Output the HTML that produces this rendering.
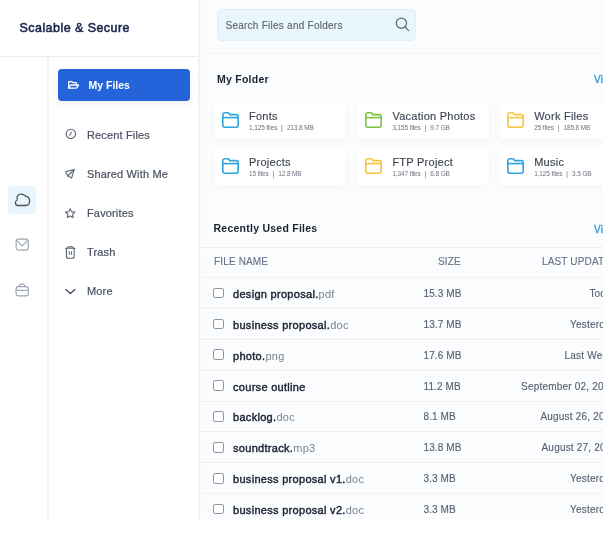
<!DOCTYPE html><html><head><meta charset="utf-8"><style>
*{margin:0;padding:0;box-sizing:border-box}
html,body{width:603px;height:547px;overflow:hidden;background:#fff;will-change:transform;font-family:"Liberation Sans",sans-serif;color:#1f2937}
.a{position:absolute}
#brand{left:19.5px;top:20.5px;font-size:12.5px;color:#1a244d;white-space:nowrap;-webkit-text-stroke:.55px #1a244d;letter-spacing:.45px}
#hdrline{left:0;top:56px;width:198px;height:1px;background:#ececee}
#iconcol{left:47px;top:57px;width:2px;height:462px;background:#f4f4f5}
#sideborder{left:198px;top:0;width:2px;height:519px;background:#f1f2f2}
#main{left:200px;top:0;width:403px;height:519px;background:linear-gradient(to right,#f8f9f9 0,#fafbfb 2px,#fafcfe 3px,#fafcfe 100%)}
#btn{left:58px;top:69px;width:132px;height:31.5px;background:#2563db;border-radius:4px;box-shadow:0 3px 7px rgba(40,60,100,.07)}
#btn span{position:absolute;left:30.5px;top:10px;color:#fff;font-size:10.5px;font-weight:bold;white-space:nowrap}
#btn svg{position:absolute}
.nav{position:absolute;left:87px;font-size:11px;color:#485061;white-space:nowrap;letter-spacing:.15px;-webkit-text-stroke:.2px #485061}
.nav svg,.ic svg{position:absolute}
.cbox{position:absolute;left:8px;top:186px;width:28px;height:28px;background:#e9f6fd;border-radius:4px}
#search{left:216.5px;top:9px;width:199.5px;height:32px;background:#eaf6fd;border:1px solid #e0f0f8;border-radius:5px}
#search span{position:absolute;left:8px;top:9.5px;font-size:10px;color:#5a626e;white-space:nowrap;letter-spacing:.25px;-webkit-text-stroke:.12px #5a626e}
#search svg{position:absolute;left:176px;top:7px}
#mainline{left:204px;top:53px;width:399px;height:1px;background:#f3f5f7}
.h2{position:absolute;font-size:10.5px;font-weight:bold;color:#1b2130;white-space:nowrap;letter-spacing:.25px}
.view{position:absolute;font-size:10px;color:#2f9bd3;white-space:nowrap;-webkit-text-stroke:.3px #2f9bd3;letter-spacing:.3px}
.card{position:absolute;width:132px;height:37px;background:#fff;border-radius:5px;box-shadow:0 2px 6px rgba(30,50,80,.04)}
.card .t{position:absolute;left:35px;top:8.2px;font-size:11px;color:#3d4452;white-space:nowrap;letter-spacing:.25px;-webkit-text-stroke:.15px #3d4452}
.card .s{position:absolute;left:35px;top:22px;font-size:6.5px;color:#6b7280;white-space:nowrap;letter-spacing:-.12px}
.card .s b{font-weight:normal;margin:0 4.2px 0 3.8px}
.card svg{position:absolute;left:7px;top:9.2px}
.row{position:absolute;left:199px;width:404px;height:2px;border-top:1px solid #eeeff2;background:#fdfefe}
.fn{position:absolute;left:233px;font-size:11px;color:#1e2534;white-space:nowrap;-webkit-text-stroke:.4px #1a2030;letter-spacing:.3px;color:#1a2030}
.fn i{font-style:normal;color:#7a8391;-webkit-text-stroke:0}
.sz{position:absolute;font-size:10px;color:#566070;white-space:nowrap;left:423.5px;letter-spacing:.1px;-webkit-text-stroke:.12px #566070}
.dt{position:absolute;font-size:10px;color:#566070;white-space:nowrap;letter-spacing:.2px;-webkit-text-stroke:.12px #566070}
.ck{position:absolute;left:213px;width:11px;height:10.8px;border:1.1px solid #8a93a2;border-radius:2.2px;background:#fff}
.th{position:absolute;font-size:10px;color:#66738a;white-space:nowrap;letter-spacing:.15px;-webkit-text-stroke:.12px #66738a}
</style></head><body>
<div id="brand" class="a">Scalable &amp; Secure</div>
<div id="hdrline" class="a"></div><div id="iconcol" class="a"></div><div id="sideborder" class="a"></div><div id="main" class="a"></div>
<div id="btn" class="a"><svg style="left:0;top:0" width="132" height="32" viewBox="58 69 132 32" fill="none" stroke="#fff" stroke-width="1.3" stroke-linejoin="round" stroke-linecap="round"><g transform="translate(66,79)"><path d="M2.65 9.2V3.3Q2.65 2.7 3.25 2.7H6L7 3.7H9.8Q10.4 3.7 10.4 4.3V6"/><path d="M2.65 9.2L4.3 6.4Q4.5 6 5 6H12Q12.6 6 12.3 6.5L10.6 8.8Q10.3 9.2 9.8 9.2Z"/></g></svg><span>My Files</span></div>
<div class="cbox"></div>
<svg class="a" style="left:13px;top:191px" width="18" height="17" viewBox="0 0 18 17" fill="none" stroke="#4b5262" stroke-width="1.3" stroke-linejoin="round"><path d="M4.2 9C3.2 5.5 5.2 3.1 8 3.1C10.2 3.1 11.6 4.2 12.4 5.2C15 5.6 16.6 7.5 16.6 10C16.6 12.6 15 14.5 12.8 14.5H5C3.4 14.5 2.4 13.3 2.4 11.8C2.4 10.4 3.2 9.3 4.2 9Z"/></svg>
<svg class="a" style="left:15.3px;top:238.2px" width="14" height="13" viewBox="0 0 14 13" fill="none" stroke="#9ea5b2" stroke-width="1.15" stroke-linejoin="round"><rect x="1.15" y="1.05" width="12.1" height="11" rx="2.2"/><path d="M1.4 2.2L7.2 7.9L12.9 2.2"/></svg>
<svg class="a" style="left:15px;top:283px" width="15" height="14" viewBox="0 0 15 14" fill="none" stroke="#9ea5b2" stroke-width="1.15" stroke-linejoin="round"><rect x="1.05" y="3.65" width="12.3" height="9.2" rx="2.5"/><path d="M3.9 3.65C4.6 1.6 5.6 0.85 7.05 0.85C8.5 0.85 9.5 1.6 10.2 3.65"/><path d="M1.05 7.3H13.35"/><path d="M6.3 7.3L6.8 8L7.3 7.3"/></svg>
<div class="nav" style="top:129.2px">Recent Files</div>
<div class="nav" style="top:168.4px">Shared With Me</div>
<div class="nav" style="top:207.4px">Favorites</div>
<div class="nav" style="top:246.3px">Trash</div>
<div class="nav" style="top:285.3px">More</div>
<svg class="a" style="left:64px;top:127.2px" width="14" height="14" viewBox="0 0 14 14" fill="none" stroke="#5d6677" stroke-width="1.1" stroke-linecap="round"><circle cx="6.85" cy="6.9" r="4.7"/><path d="M7.1 4.8Q7.2 7 5.6 8.2"/></svg>
<svg class="a" style="left:62px;top:166px" width="16" height="16" viewBox="0 0 16 16" fill="none" stroke="#5d6677" stroke-width="1.1" stroke-linejoin="round" stroke-linecap="round"><path d="M3.6 5.8L12.2 3.6L9.6 12L5.8 10.1Z"/><path d="M12.2 3.6L5.7 10"/></svg>
<svg class="a" style="left:62px;top:205px" width="17" height="16" viewBox="0 0 17 16" fill="none" stroke="#5d6677" stroke-width="1.1" stroke-linejoin="round"><path d="M8.2 3.7L9.65 6.63L12.88 7.1L10.54 9.38L11.09 12.6L8.2 11.08L5.31 12.6L5.86 9.38L3.52 7.1L6.75 6.63Z"/></svg>
<svg class="a" style="left:62px;top:243px" width="16" height="18" viewBox="0 0 16 18" fill="none" stroke="#5d6677" stroke-width="1.1" stroke-linejoin="round" stroke-linecap="round"><path d="M4.4 5.3V13.2Q4.4 15.2 6.4 15.2H10.2Q12.2 15.2 12.2 13.2V5.3"/><path d="M3.6 5.3H13"/><path d="M5.5 5.3Q5.5 3.6 8.3 3.6Q11.1 3.6 11.1 5.3"/><path d="M7.3 8.8V11.3M9.5 8.8V11.3"/></svg>
<svg class="a" style="left:62px;top:286px" width="16" height="10" viewBox="0 0 16 10" fill="none" stroke="#3f4858" stroke-width="1.3" stroke-linecap="round" stroke-linejoin="round"><path d="M3.8 3.6L8.4 7.4L12.8 3.4"/></svg>
<div id="search" class="a"><span>Search Files and Folders</span><svg width="17" height="17" viewBox="0 0 17 17" fill="none" stroke="#5f6878" stroke-width="1.3" stroke-linecap="round"><circle cx="7.4" cy="6.2" r="5.1"/><path d="M11.1 9.9L14.6 13.6"/></svg></div>
<div id="mainline" class="a"></div>
<div class="h2" style="left:217px;top:73px">My Folder</div>
<div class="view" style="left:594px;top:73.5px">View all</div>
<div class="card" style="left:214px;top:101.8px"><svg width="19" height="18" viewBox="0 0 19 18" fill="none" stroke="#2ea3dd" stroke-width="1.6" stroke-linejoin="round"><path d="M1.8 5.5V4Q1.8 1.8 4 1.8H7.2L8.8 3.6H15Q17.2 3.6 17.2 5.8V14Q17.2 16.2 15 16.2H4Q1.8 16.2 1.8 14Z"/><path d="M1.8 6.6H17.2"/></svg><span class="t">Fonts</span><span class="s">1,125 files<b>|</b>213.8 MB</span></div>
<div class="card" style="left:357.4px;top:101.8px"><svg width="19" height="18" viewBox="0 0 19 18" fill="none" stroke="#7cc242" stroke-width="1.6" stroke-linejoin="round"><path d="M1.8 5.5V4Q1.8 1.8 4 1.8H7.2L8.8 3.6H15Q17.2 3.6 17.2 5.8V14Q17.2 16.2 15 16.2H4Q1.8 16.2 1.8 14Z"/><path d="M1.8 6.6H17.2"/></svg><span class="t">Vacation Photos</span><span class="s">3,155 files<b>|</b>9.7 GB</span></div>
<div class="card" style="left:499.2px;top:101.8px"><svg width="19" height="18" viewBox="0 0 19 18" fill="none" stroke="#f5c63a" stroke-width="1.6" stroke-linejoin="round"><path d="M1.8 5.5V4Q1.8 1.8 4 1.8H7.2L8.8 3.6H15Q17.2 3.6 17.2 5.8V14Q17.2 16.2 15 16.2H4Q1.8 16.2 1.8 14Z"/><path d="M1.8 6.6H17.2"/></svg><span class="t">Work Files</span><span class="s">25 files<b>|</b>185.8 MB</span></div>
<div class="card" style="left:214px;top:148.2px"><svg width="19" height="18" viewBox="0 0 19 18" fill="none" stroke="#2ea3dd" stroke-width="1.6" stroke-linejoin="round"><path d="M1.8 5.5V4Q1.8 1.8 4 1.8H7.2L8.8 3.6H15Q17.2 3.6 17.2 5.8V14Q17.2 16.2 15 16.2H4Q1.8 16.2 1.8 14Z"/><path d="M1.8 6.6H17.2"/></svg><span class="t">Projects</span><span class="s">15 files<b>|</b>12.8 MB</span></div>
<div class="card" style="left:357.4px;top:148.2px"><svg width="19" height="18" viewBox="0 0 19 18" fill="none" stroke="#f5c63a" stroke-width="1.6" stroke-linejoin="round"><path d="M1.8 5.5V4Q1.8 1.8 4 1.8H7.2L8.8 3.6H15Q17.2 3.6 17.2 5.8V14Q17.2 16.2 15 16.2H4Q1.8 16.2 1.8 14Z"/><path d="M1.8 6.6H17.2"/></svg><span class="t">FTP Project</span><span class="s">1,347 files<b>|</b>6.8 GB</span></div>
<div class="card" style="left:499.2px;top:148.2px"><svg width="19" height="18" viewBox="0 0 19 18" fill="none" stroke="#2ea3dd" stroke-width="1.6" stroke-linejoin="round"><path d="M1.8 5.5V4Q1.8 1.8 4 1.8H7.2L8.8 3.6H15Q17.2 3.6 17.2 5.8V14Q17.2 16.2 15 16.2H4Q1.8 16.2 1.8 14Z"/><path d="M1.8 6.6H17.2"/></svg><span class="t">Music</span><span class="s">1,125 files<b>|</b>3.5 GB</span></div>
<div class="h2" style="left:213.5px;top:222px">Recently Used Files</div>
<div class="view" style="left:594px;top:223.5px">View all</div>
<div class="row" style="top:246.8px"></div>
<div class="th" style="left:214px;top:256px">FILE NAME</div>
<div class="th" style="left:438px;top:256px">SIZE</div>
<div class="th" style="left:542px;top:256px">LAST UPDATED</div>
<div class="row" style="top:277.2px"></div>
<div class="ck" style="top:287.7px"></div>
<div class="fn" style="top:288.0px">design proposal.<i>pdf</i></div>
<div class="sz" style="top:288.0px">15.3 MB</div>
<div class="dt" style="left:589.4px;top:288.0px">Today</div>
<div class="row" style="top:308.1px"></div>
<div class="ck" style="top:318.6px"></div>
<div class="fn" style="top:318.9px">business proposal.<i>doc</i></div>
<div class="sz" style="top:318.9px">13.7 MB</div>
<div class="dt" style="left:570px;top:318.9px">Yesterday</div>
<div class="row" style="top:338.9px"></div>
<div class="ck" style="top:349.4px"></div>
<div class="fn" style="top:349.7px">photo.<i>png</i></div>
<div class="sz" style="top:349.7px">17.6 MB</div>
<div class="dt" style="left:564.6px;top:349.7px">Last Week</div>
<div class="row" style="top:369.8px"></div>
<div class="ck" style="top:380.2px"></div>
<div class="fn" style="top:380.6px">course outline<i></i></div>
<div class="sz" style="top:380.6px">11.2 MB</div>
<div class="dt" style="left:521.1px;top:380.6px">September 02, 2021</div>
<div class="row" style="top:400.6px"></div>
<div class="ck" style="top:411.1px"></div>
<div class="fn" style="top:411.4px">backlog.<i>doc</i></div>
<div class="sz" style="top:411.4px">8.1 MB</div>
<div class="dt" style="left:540.4px;top:411.4px">August 26, 2021</div>
<div class="row" style="top:431.4px"></div>
<div class="ck" style="top:441.9px"></div>
<div class="fn" style="top:442.2px">soundtrack.<i>mp3</i></div>
<div class="sz" style="top:442.2px">13.8 MB</div>
<div class="dt" style="left:541.5px;top:442.2px">August 27, 2021</div>
<div class="row" style="top:462.3px"></div>
<div class="ck" style="top:472.8px"></div>
<div class="fn" style="top:473.1px">business proposal v1.<i>doc</i></div>
<div class="sz" style="top:473.1px">3.3 MB</div>
<div class="dt" style="left:570px;top:473.1px">Yesterday</div>
<div class="row" style="top:493.2px"></div>
<div class="ck" style="top:503.7px"></div>
<div class="fn" style="top:504.0px">business proposal v2.<i>doc</i></div>
<div class="sz" style="top:504.0px">3.3 MB</div>
<div class="dt" style="left:570px;top:504.0px">Yesterday</div>
</body></html>
